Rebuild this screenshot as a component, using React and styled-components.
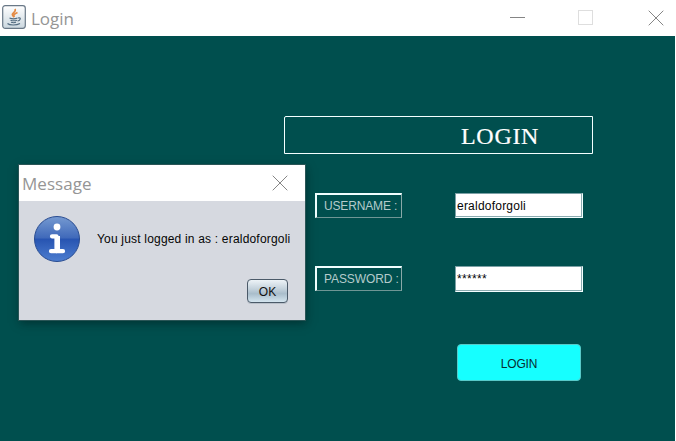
import React from "react";
import styled, { createGlobalStyle } from "styled-components";

const GlobalStyle = createGlobalStyle`
  * { box-sizing: border-box; }
  body { margin: 0; background: #fff; overflow: hidden; font-family: "Liberation Sans", Arial, sans-serif; font-size: 12px; }
`;

const Window = styled.main`
  position: relative;
  width: 675px;
  height: 441px;
  background: #004f4e;
`;

const TitleBar = styled.header`
  display: flex;
  align-items: center;
  height: 36px;
  background: #fff;
  padding: ${(p) => p.$padding};
`;

const Title = styled.h1`
  flex: 1;
  margin: 0;
  padding-top: ${(p) => p.$drop || "0"};
  font: 400 17px/24px "Open Sans", "Noto Sans", sans-serif;
  letter-spacing: ${(p) => p.$spacing || "0"};
  color: #959595;
`;

const AppIcon = styled.svg`
  width: 24px;
  height: 24px;
  margin: 0 5px 2px 0;
`;

const WindowControls = styled.div`
  display: flex;
  align-items: center;
  gap: 53px;
  height: 36px;
`;

const Glyph = styled.svg`
  display: block;
  width: 16px;
  height: 16px;
  margin-left: ${(p) => p.$shift || "0"};
  margin-right: ${(p) => (p.$shift ? "2px" : "0")};
  fill: none;
  stroke: ${(p) => p.$color || "#858585"};
`;

const Form = styled.form`
  display: flex;
  flex-direction: column;
  width: 309px;
  margin-left: 284px;
  padding-top: 80px;
`;

const Heading = styled.h2`
  height: 38px;
  margin: 0 0 39px;
  padding-left: 176px;
  border: 1px solid #f4ffff;
  border-top-left-radius: 2px;
  color: #fff;
  font: 400 24px/38px "Liberation Serif", serif;
  letter-spacing: 0.7px;
  -webkit-text-stroke: 0.2px #fff;
`;

const Row = styled.div`
  display: grid;
  grid-template-columns: 87px 128px;
  column-gap: 53px;
  height: 26px;
  margin: 0 0 47px 31px;
`;

const Label = styled.label`
  height: 25px;
  padding-left: 7px;
  border: 2px solid #f0ffff;
  border-right: 1px solid #8aa9a8;
  border-bottom: 1px solid #6f9695;
  color: #b4cbcb;
  line-height: 23px;
  white-space: nowrap;
  letter-spacing: ${(p) => p.$spacing};
`;

const Field = styled.input`
  width: 128px;
  height: ${(p) => p.$height};
  padding: ${(p) => p.$padding};
  border: 1px solid #7ba0a5;
  border-right: 1px solid #f4ffff;
  border-bottom: 1px solid #f4ffff;
  box-shadow: inset -1px -1px #8babb0;
  outline: 0;
  background: #fff;
  color: #050505;
  font: 12px "Liberation Sans", Arial, sans-serif;
  letter-spacing: ${(p) => p.$spacing};
`;

const LoginButton = styled.button`
  width: 124px;
  height: 37px;
  margin: 5px 0 0 173px;
  padding: 2px 0 0;
  border: 1px solid #58c9c8;
  border-radius: 4px;
  background: #16ffff;
  color: #082c30;
  font: 12px "Liberation Sans", Arial, sans-serif;
  letter-spacing: -0.15px;
`;

const Dialog = styled.section`
  position: absolute;
  left: 19px;
  top: 165px;
  width: 286px;
  height: 155px;
  background: #d6d9e0;
  outline: 1px solid #2a5556;
  box-shadow: 1px 3px 9px rgba(0, 20, 20, 0.5);
`;

const MessageRow = styled.div`
  display: flex;
  align-items: center;
  gap: 16px;
  height: 48px;
  margin: 14px 0 0 14px;
`;

const InfoIcon = styled.svg`
  flex: none;
  width: 48px;
  height: 48px;
`;

const Message = styled.p`
  margin: 0;
  white-space: nowrap;
  color: #050505;
  letter-spacing: 0.19px;
`;

const OkButton = styled.button`
  display: block;
  width: 41px;
  height: 24px;
  margin: 16px 17px 0 auto;
  padding: 1px 0 0;
  border: 1px solid #4b5a69;
  border-radius: 4px;
  background: linear-gradient(#edf3f7, #c4d2dc 40%, #a9bdcb 62%, #d4e5ef);
  box-shadow: 0 1px #b9c0c9;
  color: #111;
  font: 12px "Liberation Sans", Arial, sans-serif;
`;

function JavaIcon() {
  return (
    <AppIcon viewBox="0 0 24 24">
      <defs>
        <linearGradient id="tile" x2="0" y2="1"><stop stopColor="#fff" /><stop offset="1" stopColor="#cbd7df" /></linearGradient>
      </defs>
      <rect x=".7" y=".7" width="22.6" height="22.6" rx="2.5" fill="url(#tile)" stroke="#697887" strokeWidth="1.2" />
      <path d="M12 12c-5-4 3-4 1-8M12.5 12c-2-2 0-3 3-4.5" fill="none" stroke="#e48b45" strokeWidth="1.7" />
      <path d="M7.5 13c2 .8 6 .8 8 0M8.5 15.2c2 .7 4.5.7 6.5 0M9 17.3c2 .6 3.5.6 5 0M16 13c4-1 2 3-.5 3M5.5 18.5c2 2 9 2 12.5 0" fill="none" stroke="#526b80" strokeWidth="1.2" />
    </AppIcon>
  );
}

function CloseIcon() {
  return <Glyph viewBox="0 0 16 16"><path d="M.7.7 15.3 15.3M15.3.7.7 15.3" /></Glyph>;
}

export default function App() {
  return (
    <>
      <GlobalStyle />
      <Window>
        <TitleBar $padding="0 11px 0 2px">
          <JavaIcon />
          <Title $drop="1px" $spacing="-0.05px">Login</Title>
          <WindowControls>
            <Glyph viewBox="0 0 16 16"><path d="M0 7.5h15" /></Glyph>
            <Glyph viewBox="0 0 16 16" $color="#dedede" $shift="-2px"><rect x="1.5" y=".5" width="14" height="14" /></Glyph>
            <CloseIcon />
          </WindowControls>
        </TitleBar>
        <Form onSubmit={(e) => e.preventDefault()}>
          <Heading>LOGIN</Heading>
          <Row>
            <Label htmlFor="username" $spacing="-0.15px">USERNAME :</Label>
            <Field id="username" defaultValue="eraldoforgoli" $height="25px" $padding="0 1px" $spacing="0.22px" />
          </Row>
          <Row>
            <Label htmlFor="password" $spacing="-0.1px">PASSWORD :</Label>
            <Field id="password" defaultValue="******" $height="26px" $padding="0 1px 1px" $spacing="0.33px" />
          </Row>
          <LoginButton>LOGIN</LoginButton>
        </Form>
        <Dialog>
          <TitleBar $padding="0 17px 0 3px">
            <Title $drop="1px" $spacing="0.05px">Message</Title>
            <CloseIcon />
          </TitleBar>
          <MessageRow>
            <InfoIcon viewBox="0 0 48 48">
              <defs>
                <linearGradient id="globe" x2="0" y2="1"><stop stopColor="#769ad1" /><stop offset=".48" stopColor="#3f69ba" /><stop offset=".5" stopColor="#2754b1" /><stop offset="1" stopColor="#4d7ed0" /></linearGradient>
              </defs>
              <circle cx="24" cy="24" r="22.5" fill="url(#globe)" stroke="#294c91" />
              <circle cx="24" cy="12" r="3.4" fill="#fff" />
              <path d="M19 21.3h4.5v15M18 36.2h12" fill="none" stroke="#fff" strokeWidth="4.2" strokeLinecap="round" strokeLinejoin="round" />
              <path d="M24.5 21v15" stroke="#fff" strokeWidth="5" />
            </InfoIcon>
            <Message>You just logged in as : eraldoforgoli</Message>
          </MessageRow>
          <OkButton>OK</OkButton>
        </Dialog>
      </Window>
    </>
  );
}
